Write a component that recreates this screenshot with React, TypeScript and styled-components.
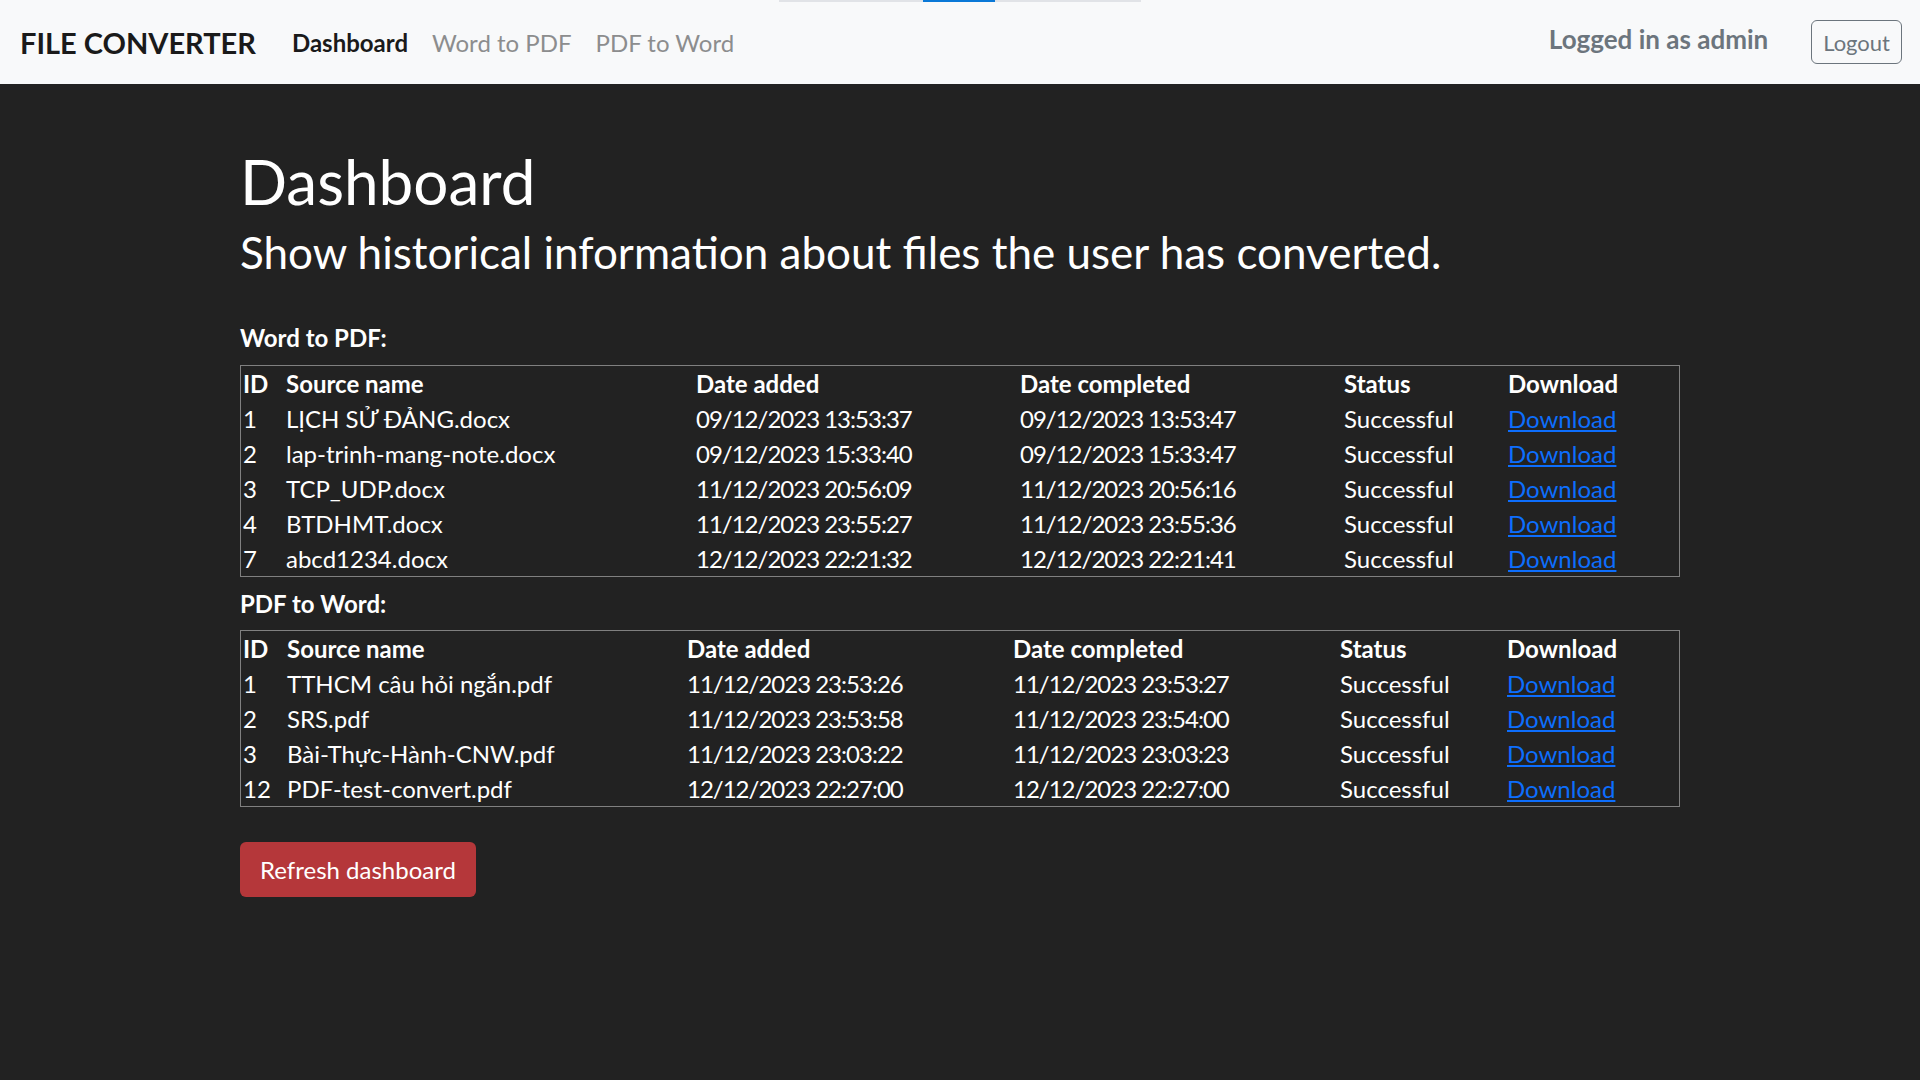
import React from "react";
import styled, { createGlobalStyle } from "styled-components";

const GlobalStyle = createGlobalStyle`
  html, body {
    margin: 0;
    padding: 0;
    background: #222222;
  }
  body {
    font-family: Lato, "Noto Sans", "Liberation Sans", sans-serif;
    color: #ffffff;
  }
  * { box-sizing: border-box; }
`;

const Page = styled.div`
  min-height: 100vh;
  background: #222222;
  display: flex;
  flex-direction: column;
`;

const Navbar = styled.nav`
  position: relative;
  height: 84px;
  background: #f8f9fa;
  display: flex;
  align-items: center;
  padding: 0 18px 0 20px;
`;

const LoadBar = styled.div`
  position: absolute;
  top: 0;
  left: 50%;
  transform: translateX(-50%);
  width: 362px;
  height: 2px;
  background: #e1e3e7;
`;

const LoadSegment = styled.div`
  position: absolute;
  top: 0;
  left: 144px;
  width: 72px;
  height: 100%;
  background: #0a78d7;
`;

const Brand = styled.a`
  font-size: 29px;
  font-weight: 700;
  color: #1a1a1a;
  text-decoration: none;
  margin-right: 36px;
  white-space: nowrap;
`;

const NavList = styled.div`
  display: flex;
  gap: 24px;
`;

const NavLink = styled.a<{ $active?: boolean }>`
  font-size: 24px;
  font-weight: ${(p) => (p.$active ? 700 : 400)};
  color: ${(p) => (p.$active ? "#1a1a1a" : "#8c8d8e")};
  text-decoration: none;
  white-space: nowrap;
`;

const Spacer = styled.div`
  flex: 1;
`;

const UserText = styled.span`
  font-size: 26px;
  font-weight: 700;
  color: #6c757d;
  margin-right: 43px;
  margin-bottom: 7px;
`;

const LogoutButton = styled.button`
  height: 44px;
  padding: 0 11px;
  border: 1px solid #6c757d;
  border-radius: 6px;
  background: transparent;
  color: #6c757d;
  font-family: inherit;
  font-size: 22px;
`;

const Main = styled.main`
  width: 1440px;
  margin: 0 auto;
  padding-top: 60px;
`;

const Title = styled.h1`
  margin: 0 0 8px;
  font-size: 62px;
  font-weight: 400;
  line-height: 1.2;
`;

const Subtitle = styled.h3`
  margin: 0 0 41px;
  font-size: 44px;
  font-weight: 400;
  line-height: 1.2;
`;

const SectionLabel = styled.p`
  margin: 0 0 8.5px;
  font-size: 24px;
  font-weight: 700;
  line-height: 36px;
`;

const Table = styled.table`
  width: 100%;
  table-layout: fixed;
  border: 1px solid #808080;
  border-spacing: 0;
  margin-bottom: 9px;
  font-size: 24px;
`;

const Col = styled.col<{ $w: number }>`
  width: ${(p) => p.$w}px;
`;

const Th = styled.th`
  text-align: left;
  font-weight: 700;
  padding: 0 2px;
  height: 35px;
  line-height: 35px;
  white-space: nowrap;
`;

const Td = styled.td<{ $tight?: boolean }>`
  font-weight: 400;
  padding: 0 2px;
  height: 35px;
  line-height: 35px;
  white-space: nowrap;
  letter-spacing: ${(p) => (p.$tight ? "-1px" : "normal")};
`;

const DownloadLink = styled.a`
  color: #0d6efd;
  text-decoration: underline;
`;

const RefreshButton = styled.button`
  margin-top: 26px;
  height: 55px;
  padding: 0 20px;
  border: none;
  border-radius: 6px;
  background: #b5373a;
  color: #ffffff;
  font-family: inherit;
  font-size: 24px;
`;

type Row = { id: number; name: string; added: string; done: string };

const wordToPdf: Row[] = [
  { id: 1, name: "LỊCH SỬ ĐẢNG.docx", added: "09/12/2023 13:53:37", done: "09/12/2023 13:53:47" },
  { id: 2, name: "lap-trinh-mang-note.docx", added: "09/12/2023 15:33:40", done: "09/12/2023 15:33:47" },
  { id: 3, name: "TCP_UDP.docx", added: "11/12/2023 20:56:09", done: "11/12/2023 20:56:16" },
  { id: 4, name: "BTDHMT.docx", added: "11/12/2023 23:55:27", done: "11/12/2023 23:55:36" },
  { id: 7, name: "abcd1234.docx", added: "12/12/2023 22:21:32", done: "12/12/2023 22:21:41" },
];

const pdfToWord: Row[] = [
  { id: 1, name: "TTHCM câu hỏi ngắn.pdf", added: "11/12/2023 23:53:26", done: "11/12/2023 23:53:27" },
  { id: 2, name: "SRS.pdf", added: "11/12/2023 23:53:58", done: "11/12/2023 23:54:00" },
  { id: 3, name: "Bài-Thực-Hành-CNW.pdf", added: "11/12/2023 23:03:22", done: "11/12/2023 23:03:23" },
  { id: 12, name: "PDF-test-convert.pdf", added: "12/12/2023 22:27:00", done: "12/12/2023 22:27:00" },
];

function HistoryTable({ rows, widths }: { rows: Row[]; widths: number[] }) {
  return (
    <Table>
      <colgroup>
        {widths.map((w, i) => (
          <Col key={i} $w={w} />
        ))}
      </colgroup>
      <thead>
        <tr>
          <Th>ID</Th>
          <Th>Source name</Th>
          <Th>Date added</Th>
          <Th>Date completed</Th>
          <Th>Status</Th>
          <Th>Download</Th>
        </tr>
      </thead>
      <tbody>
        {rows.map((r) => (
          <tr key={r.id}>
            <Td>{r.id}</Td>
            <Td>{r.name}</Td>
            <Td $tight>{r.added}</Td>
            <Td $tight>{r.done}</Td>
            <Td>Successful</Td>
            <Td>
              <DownloadLink href="#">Download</DownloadLink>
            </Td>
          </tr>
        ))}
      </tbody>
    </Table>
  );
}

export default function App() {
  return (
    <Page>
      <GlobalStyle />
      <Navbar>
        <LoadBar>
          <LoadSegment />
        </LoadBar>
        <Brand href="#">FILE CONVERTER</Brand>
        <NavList>
          <NavLink href="#" $active>
            Dashboard
          </NavLink>
          <NavLink href="#">Word to PDF</NavLink>
          <NavLink href="#">PDF to Word</NavLink>
        </NavList>
        <Spacer />
        <UserText>Logged in as admin</UserText>
        <LogoutButton>Logout</LogoutButton>
      </Navbar>
      <Main>
        <Title>Dashboard</Title>
        <Subtitle>Show historical information about files the user has converted.</Subtitle>
        <SectionLabel>Word to PDF:</SectionLabel>
        <HistoryTable rows={wordToPdf} widths={[43, 410, 324, 324, 164, 173]} />
        <SectionLabel>PDF to Word:</SectionLabel>
        <HistoryTable rows={pdfToWord} widths={[44, 400, 326, 327, 167, 174]} />
        <RefreshButton>Refresh dashboard</RefreshButton>
      </Main>
    </Page>
  );
}
